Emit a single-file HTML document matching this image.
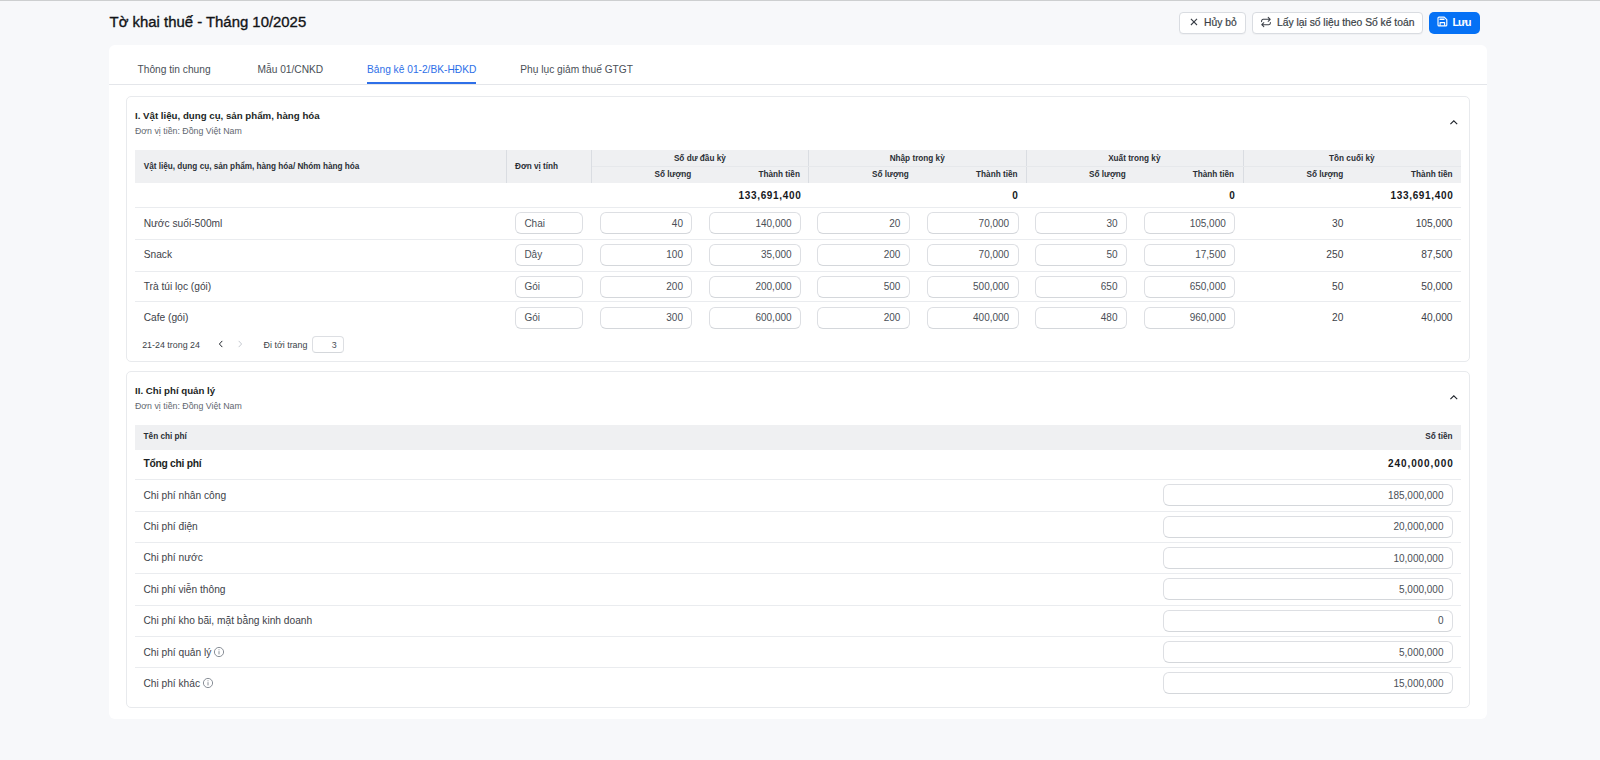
<!DOCTYPE html>
<html lang="vi"><head><meta charset="utf-8"><title>Tờ khai thuế</title>
<style>
*{box-sizing:border-box;margin:0;padding:0}
html,body{width:1600px;height:760px;overflow:hidden}
body{background:#f7f8fa;font-family:"Liberation Sans", sans-serif;color:#1f2329;position:relative}
.abs{position:absolute}
.t{position:absolute;white-space:nowrap;line-height:1}
.topline{position:absolute;left:0;top:0;width:1600px;height:1px;background:#cdcfd0}
.title{font-size:14.9px;color:#121417;-webkit-text-stroke:0.35px #121417}
.btn{position:absolute;height:22px;border:1px solid #d9dce1;border-radius:4px;background:#fff;box-shadow:0 1px 1px rgba(0,0,0,0.03)}
.btn .t{font-size:10.3px;color:#3a3f47;-webkit-text-stroke:0.2px #3a3f47}
.card{position:absolute;left:109px;top:45px;width:1378px;height:674px;background:#fff;border-radius:6px}
.tabline{position:absolute;left:109px;top:84px;width:1378px;height:1px;background:#e4e6ea}
.tab{font-size:10.2px;color:#4a4f57}
.tab.on{color:#2e6fe8}
.sec{position:absolute;border:1px solid #e8eaed;border-radius:5px;background:#fff}
.stitle{font-size:9.7px;font-weight:700;color:#1c1f24}
.ssub{font-size:8.8px;color:#62676f}
.hdr{position:absolute;background:#eff0f2}
.vl{position:absolute;width:1px;background:#dadde2}
.hl{position:absolute;height:1px;background:#eaecef}
.th{font-size:8.2px;font-weight:700;color:#2a2e35}
.td{font-size:10.2px;color:#3d4249}
.tb{font-size:10px;font-weight:700;color:#16181c;letter-spacing:0.4px}
.inp{position:absolute;height:23px;border:1px solid #dddfe3;border-bottom-color:#d4d7db;border-radius:6px;background:#fff}
.inp .t{font-size:10px;color:#4a4f57}
.pg{font-size:8.9px;color:#3a3f47}
</style></head><body>
<div class="topline"></div><div class="t title" style="left:109.60px;top:14.69px;">Tờ khai thuế - Tháng 10/2025</div><div class="btn" style="left:1179px;top:12px;width:67px"><svg class="abs" style="left:9.6px;top:5.4px" width="8" height="8" viewBox="0 0 8 8"><path d="M0.9 0.9L7 7M7 0.9L0.9 7" stroke="#3a3f47" stroke-width="1.1" fill="none"/></svg><div class="t" style="left:24px;top:4.58px">Hủy bỏ</div></div><div class="btn" style="left:1252px;top:12px;width:171px"><svg class="abs" style="left:7px;top:2.8px" width="12" height="12" viewBox="0 0 12 12"><path d="M1.6 5.6V4.9C1.6 4.0 2.3 3.3 3.2 3.3H10.2M8.2 1.3L10.2 3.3L8.2 5.3M10.4 6.4V7.1C10.4 8.0 9.7 8.7 8.8 8.7H1.8M3.8 10.7L1.8 8.7L3.8 6.7" stroke="#3a3f47" stroke-width="1.05" fill="none" stroke-linecap="round" stroke-linejoin="round"/></svg><div class="t" style="left:24px;top:4.58px">Lấy lại số liệu theo Số kế toán</div></div><div class="abs" style="left:1428.5px;top:12px;width:51.5px;height:22px;background:#0571f5;border-radius:5px"><svg class="abs" style="left:8.7px;top:4.1px" width="11" height="11" viewBox="0 0 11 11"><path d="M2 1.1H7.2L9.8 3.7V8.9C9.8 9.5 9.4 9.9 8.8 9.9H2C1.4 9.9 1 9.5 1 8.9V2.1C1 1.5 1.4 1.1 2 1.1Z" stroke="#fff" stroke-width="1.15" fill="none" stroke-linejoin="round"/><path d="M3 3.2H7" stroke="#fff" stroke-width="1.4" stroke-linecap="round"/><path d="M3.1 9.8V6.6H7.6V9.8" stroke="#fff" stroke-width="1.1" fill="none" stroke-linejoin="round"/></svg><div class="t" style="left:24px;top:5.03px;font-size:10.6px;font-weight:700;letter-spacing:-0.85px;color:#fff">Lưu</div></div><div class="card"></div><div class="tabline"></div><div class="t tab" style="left:137.50px;top:65.47px;">Thông tin chung</div><div class="t tab" style="left:257.50px;top:65.47px;">Mẫu 01/CNKD</div><div class="t tab on" style="left:367.00px;top:65.47px;">Bảng kê 01-2/BK-HĐKD</div><div class="t tab" style="left:520.30px;top:65.47px;">Phụ lục giảm thuế GTGT</div><div class="abs" style="left:367px;top:82px;width:108.5px;height:2px;background:#2e6fe8"></div><div class="sec" style="left:126px;top:96px;width:1344px;height:266px"></div><div class="t stitle" style="left:135.00px;top:110.79px;">I. Vật liệu, dụng cụ, sản phẩm, hàng hóa</div><div class="t ssub" style="left:135.00px;top:126.55px;">Đơn vị tiền: Đồng Việt Nam</div><svg class="abs" style="left:1449px;top:119.4px" width="10" height="7" viewBox="0 0 10 7"><path d="M1.4 5.2L4.8 1.8L8.2 5.2" stroke="#1f242b" stroke-width="1.1" fill="none"/></svg><div class="hdr" style="left:135px;top:150px;width:1326px;height:33px"></div><div class="vl" style="left:506.4px;top:150px;height:33px"></div><div class="vl" style="left:591.3px;top:150px;height:33px"></div><div class="vl" style="left:808.4px;top:150px;height:33px"></div><div class="vl" style="left:1026.0px;top:150px;height:33px"></div><div class="vl" style="left:1242.6px;top:150px;height:33px"></div><div class="abs" style="left:592.3px;top:166px;width:868.7px;height:1px;background:#e6e8eb"></div><div class="t th" style="left:143.70px;top:163.06px;">Vật liệu, dụng cụ, sản phẩm, hàng hóa/ Nhóm hàng hóa</div><div class="t th" style="left:515.00px;top:163.06px;">Đơn vị tính</div><div class="t th" style="left:499.85px;width:400px;text-align:center;top:155.06px;">Số dư đầu kỳ</div><div class="t th" style="right:908.65px;top:171.06px;">Số lượng</div><div class="t th" style="right:800.10px;top:171.06px;">Thành tiền</div><div class="t th" style="left:717.20px;width:400px;text-align:center;top:155.06px;">Nhập trong kỳ</div><div class="t th" style="right:691.30px;top:171.06px;">Số lượng</div><div class="t th" style="right:582.50px;top:171.06px;">Thành tiền</div><div class="t th" style="left:934.30px;width:400px;text-align:center;top:155.06px;">Xuất trong kỳ</div><div class="t th" style="right:474.20px;top:171.06px;">Số lượng</div><div class="t th" style="right:365.90px;top:171.06px;">Thành tiền</div><div class="t th" style="left:1151.80px;width:400px;text-align:center;top:155.06px;">Tồn cuối kỳ</div><div class="t th" style="right:256.70px;top:171.06px;">Số lượng</div><div class="t th" style="right:147.50px;top:171.06px;">Thành tiền</div><div class="t tb" style="right:798.65px;top:191.03px;letter-spacing:0.65px">133,691,400</div><div class="t tb" style="right:581.65px;top:191.03px;letter-spacing:0.65px">0</div><div class="t tb" style="right:364.65px;top:191.03px;letter-spacing:0.65px">0</div><div class="t tb" style="right:146.65px;top:191.03px;letter-spacing:0.65px">133,691,400</div><div class="hl" style="left:135px;top:207px;width:1326px"></div><div class="t td" style="left:143.70px;top:218.67px;">Nước suối-500ml</div><div class="inp" style="left:515.4px;top:212.0px;width:67.5px;height:22px;"><div class="t" style="left:8px;top:5.84px">Chai</div></div><div class="inp" style="left:600.3px;top:212.0px;width:92.2px;height:22px;"><div class="t" style="right:8.5px;top:5.84px">40</div></div><div class="inp" style="left:709.4px;top:212.0px;width:91.7px;height:22px;"><div class="t" style="right:8.5px;top:5.84px">140,000</div></div><div class="inp" style="left:817.4px;top:212.0px;width:92.5px;height:22px;"><div class="t" style="right:8.5px;top:5.84px">20</div></div><div class="inp" style="left:926.8px;top:212.0px;width:91.9px;height:22px;"><div class="t" style="right:8.5px;top:5.84px">70,000</div></div><div class="inp" style="left:1035.0px;top:212.0px;width:92.0px;height:22px;"><div class="t" style="right:8.5px;top:5.84px">30</div></div><div class="inp" style="left:1143.9px;top:212.0px;width:91.4px;height:22px;"><div class="t" style="right:8.5px;top:5.84px">105,000</div></div><div class="t td" style="right:256.70px;top:218.67px;">30</div><div class="t td" style="right:147.50px;top:218.67px;">105,000</div><div class="hl" style="left:135px;top:239px;width:1326px"></div><div class="t td" style="left:143.70px;top:250.07px;">Snack</div><div class="inp" style="left:515.4px;top:244.0px;width:67.5px;height:22px;"><div class="t" style="left:8px;top:5.23px">Dây</div></div><div class="inp" style="left:600.3px;top:244.0px;width:92.2px;height:22px;"><div class="t" style="right:8.5px;top:5.23px">100</div></div><div class="inp" style="left:709.4px;top:244.0px;width:91.7px;height:22px;"><div class="t" style="right:8.5px;top:5.23px">35,000</div></div><div class="inp" style="left:817.4px;top:244.0px;width:92.5px;height:22px;"><div class="t" style="right:8.5px;top:5.23px">200</div></div><div class="inp" style="left:926.8px;top:244.0px;width:91.9px;height:22px;"><div class="t" style="right:8.5px;top:5.23px">70,000</div></div><div class="inp" style="left:1035.0px;top:244.0px;width:92.0px;height:22px;"><div class="t" style="right:8.5px;top:5.23px">50</div></div><div class="inp" style="left:1143.9px;top:244.0px;width:91.4px;height:22px;"><div class="t" style="right:8.5px;top:5.23px">17,500</div></div><div class="t td" style="right:256.70px;top:250.07px;">250</div><div class="t td" style="right:147.50px;top:250.07px;">87,500</div><div class="hl" style="left:135px;top:271px;width:1326px"></div><div class="t td" style="left:143.70px;top:281.97px;">Trà túi lọc (gói)</div><div class="inp" style="left:515.4px;top:276.0px;width:67.5px;height:22px;"><div class="t" style="left:8px;top:5.14px">Gói</div></div><div class="inp" style="left:600.3px;top:276.0px;width:92.2px;height:22px;"><div class="t" style="right:8.5px;top:5.14px">200</div></div><div class="inp" style="left:709.4px;top:276.0px;width:91.7px;height:22px;"><div class="t" style="right:8.5px;top:5.14px">200,000</div></div><div class="inp" style="left:817.4px;top:276.0px;width:92.5px;height:22px;"><div class="t" style="right:8.5px;top:5.14px">500</div></div><div class="inp" style="left:926.8px;top:276.0px;width:91.9px;height:22px;"><div class="t" style="right:8.5px;top:5.14px">500,000</div></div><div class="inp" style="left:1035.0px;top:276.0px;width:92.0px;height:22px;"><div class="t" style="right:8.5px;top:5.14px">650</div></div><div class="inp" style="left:1143.9px;top:276.0px;width:91.4px;height:22px;"><div class="t" style="right:8.5px;top:5.14px">650,000</div></div><div class="t td" style="right:256.70px;top:281.97px;">50</div><div class="t td" style="right:147.50px;top:281.97px;">50,000</div><div class="hl" style="left:135px;top:301px;width:1326px"></div><div class="t td" style="left:143.70px;top:312.87px;">Cafe (gói)</div><div class="inp" style="left:515.4px;top:307.0px;width:67.5px;height:22px;"><div class="t" style="left:8px;top:5.04px">Gói</div></div><div class="inp" style="left:600.3px;top:307.0px;width:92.2px;height:22px;"><div class="t" style="right:8.5px;top:5.04px">300</div></div><div class="inp" style="left:709.4px;top:307.0px;width:91.7px;height:22px;"><div class="t" style="right:8.5px;top:5.04px">600,000</div></div><div class="inp" style="left:817.4px;top:307.0px;width:92.5px;height:22px;"><div class="t" style="right:8.5px;top:5.04px">200</div></div><div class="inp" style="left:926.8px;top:307.0px;width:91.9px;height:22px;"><div class="t" style="right:8.5px;top:5.04px">400,000</div></div><div class="inp" style="left:1035.0px;top:307.0px;width:92.0px;height:22px;"><div class="t" style="right:8.5px;top:5.04px">480</div></div><div class="inp" style="left:1143.9px;top:307.0px;width:91.4px;height:22px;"><div class="t" style="right:8.5px;top:5.04px">960,000</div></div><div class="t td" style="right:256.70px;top:312.87px;">20</div><div class="t td" style="right:147.50px;top:312.87px;">40,000</div><div class="t pg" style="left:142.20px;top:340.77px;">21-24 trong 24</div><svg class="abs" style="left:216.6px;top:339.4px" width="8" height="10" viewBox="0 0 8 10"><path d="M5.3 1.9L2.4 5L5.3 8.1" stroke="#1f242b" stroke-width="1" fill="none"/></svg><svg class="abs" style="left:235.8px;top:339.4px" width="8" height="10" viewBox="0 0 8 10"><path d="M2.7 1.9L5.6 5L2.7 8.1" stroke="#c6cad1" stroke-width="1" fill="none"/></svg><div class="t pg" style="left:263.60px;top:340.77px;">Đi tới trang</div><div class="inp" style="left:312.2px;top:336px;width:31.4px;height:16.5px;border-radius:4px"><div class="t" style="right:6px;top:3.77px;font-size:8.9px">3</div></div><div class="sec" style="left:126px;top:371px;width:1344px;height:337px"></div><div class="t stitle" style="left:135.00px;top:386.29px;">II. Chi phí quản lý</div><div class="t ssub" style="left:135.00px;top:402.25px;">Đơn vị tiền: Đồng Việt Nam</div><svg class="abs" style="left:1449px;top:394.4px" width="10" height="7" viewBox="0 0 10 7"><path d="M1.4 5.2L4.8 1.8L8.2 5.2" stroke="#1f242b" stroke-width="1.1" fill="none"/></svg><div class="hdr" style="left:135px;top:425px;width:1326px;height:24.5px"></div><div class="t th" style="left:143.60px;top:433.06px;">Tên chi phí</div><div class="t th" style="right:147.50px;top:433.06px;">Số tiền</div><div class="t stitle" style="left:143.60px;top:459.39px;font-size:10.3px;letter-spacing:-0.3px;top:458.9px">Tổng chi phí</div><div class="t tb" style="right:146.40px;top:459.34px;letter-spacing:0.9px">240,000,000</div><div class="hl" style="left:135px;top:479px;width:1326px"></div><div class="t td" style="left:143.40px;top:490.57px;">Chi phí nhân công</div><div class="inp" style="left:1163.0px;top:484.0px;width:290.0px;height:22px;"><div class="t" style="right:8.5px;top:5.73px">185,000,000</div></div><div class="hl" style="left:135px;top:511px;width:1326px"></div><div class="t td" style="left:143.40px;top:521.97px;">Chi phí điện</div><div class="inp" style="left:1163.0px;top:516.0px;width:290.0px;height:22px;"><div class="t" style="right:8.5px;top:5.14px">20,000,000</div></div><div class="hl" style="left:135px;top:542px;width:1326px"></div><div class="t td" style="left:143.40px;top:553.37px;">Chi phí nước</div><div class="inp" style="left:1163.0px;top:547.0px;width:290.0px;height:22px;"><div class="t" style="right:8.5px;top:5.54px">10,000,000</div></div><div class="hl" style="left:135px;top:573px;width:1326px"></div><div class="t td" style="left:143.40px;top:584.77px;">Chi phí viễn thông</div><div class="inp" style="left:1163.0px;top:578.0px;width:290.0px;height:22px;"><div class="t" style="right:8.5px;top:5.93px">5,000,000</div></div><div class="hl" style="left:135px;top:605px;width:1326px"></div><div class="t td" style="left:143.40px;top:616.17px;">Chi phí kho bãi, mặt bằng kinh doanh</div><div class="inp" style="left:1163.0px;top:610.0px;width:290.0px;height:22px;"><div class="t" style="right:8.5px;top:5.33px">0</div></div><div class="hl" style="left:135px;top:636px;width:1326px"></div><div class="t td" style="left:143.40px;top:647.57px;">Chi phí quản lý</div><div class="inp" style="left:1163.0px;top:641.0px;width:290.0px;height:22px;"><div class="t" style="right:8.5px;top:5.74px">5,000,000</div></div><div class="hl" style="left:135px;top:667px;width:1326px"></div><div class="t td" style="left:143.40px;top:678.97px;">Chi phí khác</div><div class="inp" style="left:1163.0px;top:672.0px;width:290.0px;height:22px;"><div class="t" style="right:8.5px;top:6.13px">15,000,000</div></div><svg class="abs" style="left:213px;top:645.8px" width="12" height="12" viewBox="0 0 12 12"><circle cx="6" cy="6" r="4.6" stroke="#7d838c" stroke-width="0.9" fill="none"/><path d="M6 5.2V8.4" stroke="#7d838c" stroke-width="0.9"/><circle cx="6" cy="3.7" r="0.55" fill="#7d838c"/></svg><svg class="abs" style="left:201.7px;top:677.3px" width="12" height="12" viewBox="0 0 12 12"><circle cx="6" cy="6" r="4.6" stroke="#7d838c" stroke-width="0.9" fill="none"/><path d="M6 5.2V8.4" stroke="#7d838c" stroke-width="0.9"/><circle cx="6" cy="3.7" r="0.55" fill="#7d838c"/></svg>
</body></html>
